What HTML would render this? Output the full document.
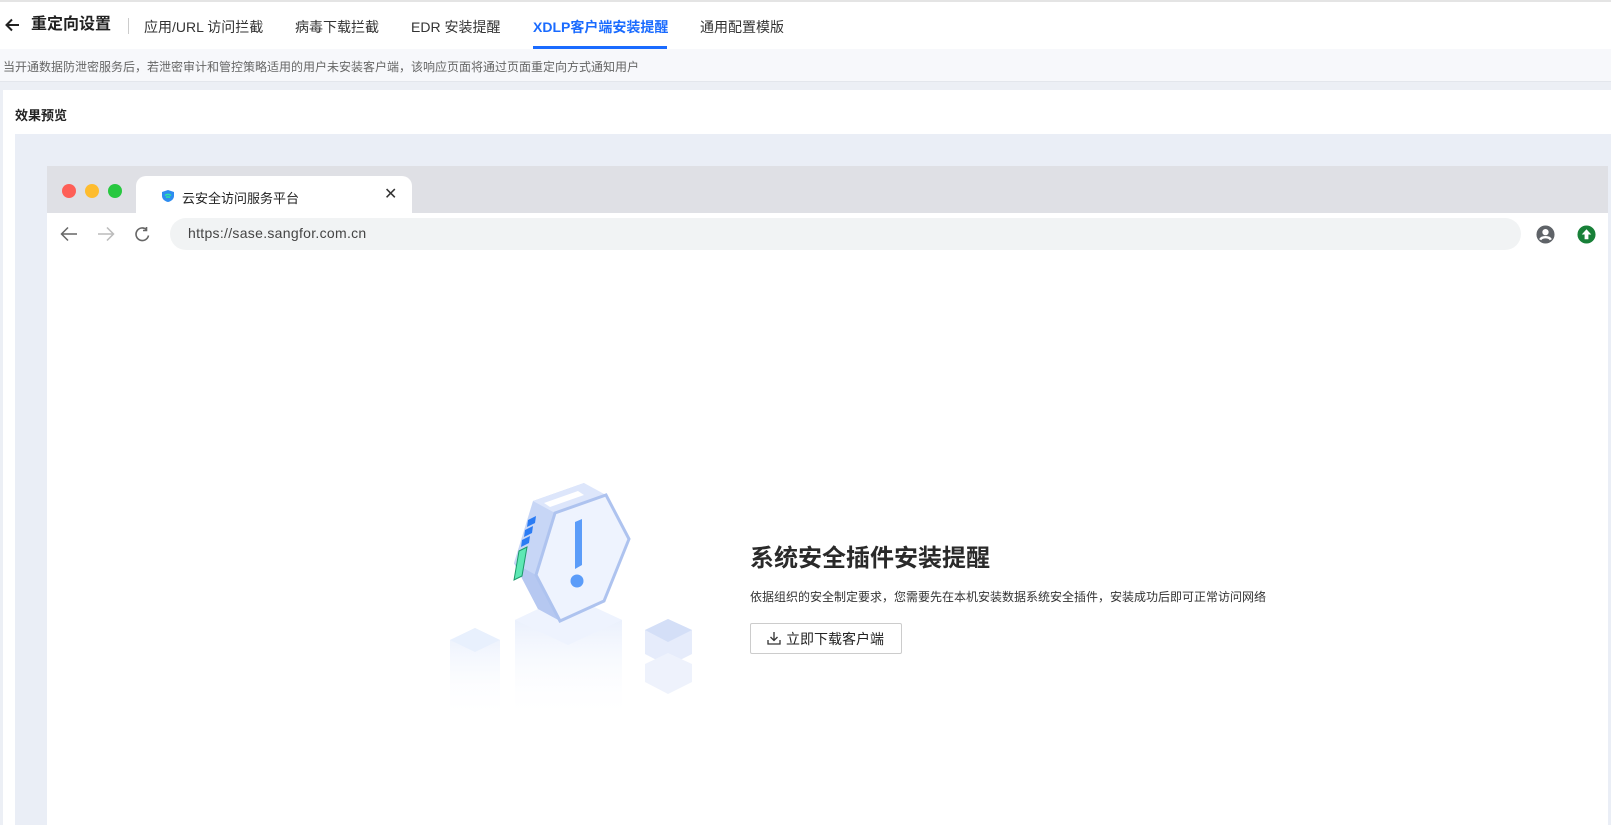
<!DOCTYPE html>
<html><head><meta charset="utf-8"><style>
*{margin:0;padding:0;box-sizing:border-box}
body{width:1611px;height:825px;overflow:hidden;background:#eceff5;font-family:"Liberation Sans","Noto Sans CJK SC",sans-serif;position:relative;color:#333}
.abs{position:absolute}
</style></head><body>
<div class="abs" style="left:0;top:0;width:1611px;height:49px;background:#fff;border-top:2px solid #e4e4e4"></div>
<svg class="abs" style="left:5px;top:18px" width="16" height="14" viewBox="0 0 16 14"><path d="M14 7H2M7 1.5L1.5 7L7 12.5" stroke="#222" stroke-width="2" fill="none"/></svg>
<div class="abs" style="left:31px;top:15px;font-size:16px;font-weight:bold;color:#222;line-height:20px">重定向设置</div>
<div class="abs" style="left:128px;top:18px;width:1px;height:16px;background:#ccc"></div>
<div class="abs" style="left:144px;top:17px;font-size:14px;color:#333">应用/URL 访问拦截</div>
<div class="abs" style="left:295px;top:17px;font-size:14px;color:#333">病毒下载拦截</div>
<div class="abs" style="left:411px;top:17px;font-size:14px;color:#333">EDR 安装提醒</div>
<div class="abs" style="left:533px;top:17px;font-size:14px;color:#1a6bff;font-weight:bold">XDLP客户端安装提醒</div>
<div class="abs" style="left:533px;top:46px;width:134px;height:3px;background:#1a6bff"></div>
<div class="abs" style="left:700px;top:17px;font-size:14px;color:#333">通用配置模版</div>
<div class="abs" style="left:0;top:49px;width:1611px;height:33px;background:#f7f8fb;border-bottom:1px solid #e3e6ec"></div>
<div class="abs" style="left:3px;top:58px;font-size:12px;color:#666">当开通数据防泄密服务后，若泄密审计和管控策略适用的用户未安装客户端，该响应页面将通过页面重定向方式通知用户</div>
<div class="abs" style="left:3px;top:90px;width:1608px;height:735px;background:#fff"></div>
<div class="abs" style="left:15px;top:105px;font-size:13px;font-weight:bold;color:#222">效果预览</div>
<div class="abs" style="left:15px;top:134px;width:1596px;height:691px;background:#eaeef6"></div>
<div class="abs" style="left:47px;top:166px;width:1561px;height:659px;background:#fff"></div>
<div class="abs" style="left:47px;top:166px;width:1561px;height:47px;background:#dfe0e5"></div>
<div class="abs" style="left:62px;top:184px;width:14px;height:14px;border-radius:50%;background:#fe5f57"></div>
<div class="abs" style="left:85px;top:184px;width:14px;height:14px;border-radius:50%;background:#febc2e"></div>
<div class="abs" style="left:108px;top:184px;width:14px;height:14px;border-radius:50%;background:#28c840"></div>
<div class="abs" style="left:136px;top:176px;width:276px;height:38px;background:#fff;border-radius:10px 10px 0 0"></div>
<svg class="abs" style="left:161px;top:189px" width="14" height="14" viewBox="0 0 14 14"><path d="M7 1L13 3V7C13 10 10 12.5 7 13C4 12.5 1 10 1 7V3Z" fill="#2d8cf0"/><path d="M4 6.5C5.5 5 8.5 5 10 6.5M5 8.5C6 7.7 8 7.7 9 8.5" stroke="#2ee6a0" stroke-width="1.5" fill="none"/></svg>
<div class="abs" style="left:182px;top:188px;font-size:13px;color:#222">云安全访问服务平台</div>
<div class="abs" style="left:384px;top:184px;font-size:16px;color:#333">✕</div>
<svg class="abs" style="left:60px;top:226px" width="18" height="16" viewBox="0 0 18 16"><path d="M17 8H2M8 1.5L1.5 8L8 14.5" stroke="#666" stroke-width="1.5" fill="none"/></svg>
<svg class="abs" style="left:97px;top:226px" width="18" height="16" viewBox="0 0 18 16"><path d="M1 8H16M10 1.5L16.5 8L10 14.5" stroke="#bbb" stroke-width="1.5" fill="none"/></svg>
<svg class="abs" style="left:134px;top:226px" width="17" height="17" viewBox="0 0 17 17"><path d="M14.5 9.5A6.3 6.3 0 1 1 12.5 3.5M12.5 1V4.5H9" stroke="#666" stroke-width="1.6" fill="none"/></svg>
<div class="abs" style="left:170px;top:218px;width:1351px;height:32px;border-radius:16px;background:#f1f3f4"></div>
<div class="abs" style="left:188px;top:225px;font-size:14px;color:#444;letter-spacing:0.3px">https://sase.sangfor.com.cn</div>
<svg class="abs" style="left:1536px;top:225px" width="19" height="19" viewBox="0 0 20 20"><circle cx="10" cy="10" r="9.5" fill="#5f6368"/><circle cx="10" cy="7.5" r="3.3" fill="#fff"/><path d="M4.5 15.5C6 12 14 12 15.5 15.5" stroke="#fff" stroke-width="2.5" fill="none"/></svg>
<svg class="abs" style="left:1577px;top:225px" width="19" height="19" viewBox="0 0 20 20"><circle cx="10" cy="10" r="9.5" fill="#188038"/><path d="M10 4.5L15 10H12V15H8V10H5Z" fill="#fff"/></svg>
<!-- illustration -->
<svg class="abs" style="left:450px;top:480px" width="250" height="240" viewBox="0 0 250 240">
<defs><linearGradient id="g1" x1="0" y1="0" x2="0" y2="1"><stop offset="0" stop-color="#dfe8fb"/><stop offset="1" stop-color="#fff" stop-opacity="0"/></linearGradient></defs>
<path d="M65 140L118 115L172 140V240H65Z" fill="url(#g1)"/>
<path d="M65 140L118 115L172 140L118 165Z" fill="#eef3fe"/>
<path d="M0 160L25 148L50 160V240H0Z" fill="url(#g1)" opacity=".7"/>
<path d="M0 160L25 148L50 160L25 172Z" fill="#e8f0fd"/>
<path d="M195 150L218 139L242 150V174L218 186L195 174Z" fill="#e6ecfb"/>
<path d="M195 150L218 139L242 150L218 162Z" fill="#d4dff7"/>
<path d="M195 184L218 173L242 184V202L218 214L195 202Z" fill="#eef2fc"/>
<path d="M83 21L134 3L157 47L132 109L88 129L64 83Z" fill="#c7d6f6"/>
<path d="M83 21L134 3L156 15L105 33Z" fill="#dde6fb"/>
<path d="M94 23L128 11L134 15L100 27Z" fill="#fff"/>
<path d="M64 83L86 95L110 141L88 129Z" fill="#b6c8f1"/>
<path d="M105 33L156 15L179 59L154 121L110 141L86 95Z" fill="#eef3fe" stroke="#aec3ef" stroke-width="3"/>
<path d="M78 40L86 36L85 43L77 47ZM75 50L83 46L82 53L74 57ZM72 60L80 56L79 63L71 67Z" fill="#2b7cf4"/>
<path d="M69 71L77 67L72 96L64 100Z" fill="#5ee8b4" stroke="#1c9a6a"/>
<path d="M125 42L132 39L132 85L125 89Z" fill="#5b9cf9"/>
<circle cx="127" cy="101" r="6.5" fill="#5b9cf9"/>
</svg>
<div class="abs" style="left:750px;top:538px;font-size:24px;font-weight:bold;color:#2a2a2a">系统安全插件安装提醒</div>
<div class="abs" style="left:750px;top:588px;font-size:12px;color:#333">依据组织的安全制定要求，您需要先在本机安装数据系统安全插件，安装成功后即可正常访问网络</div>
<div class="abs" style="left:750px;top:623px;width:152px;height:31px;border:1px solid #ccc;border-radius:2px;background:#fff"></div>
<svg class="abs" style="left:767px;top:631px" width="14" height="14" viewBox="0 0 14 14"><path d="M7 1V9M3.5 6L7 9.5L10.5 6M1 9V13H13V9" stroke="#333" stroke-width="1.3" fill="none"/></svg>
<div class="abs" style="left:786px;top:629px;font-size:14px;color:#222">立即下载客户端</div>
</body></html>
